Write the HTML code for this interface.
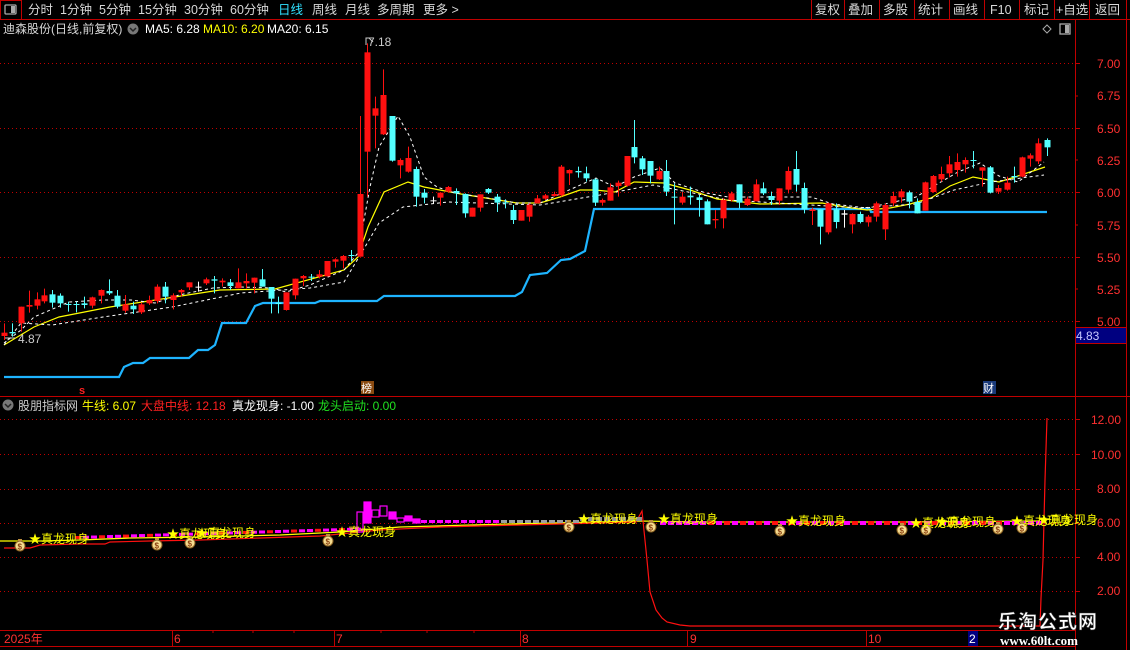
<!DOCTYPE html>
<html><head><meta charset="utf-8"><style>
html,body{margin:0;padding:0;background:#000;width:1130px;height:650px;overflow:hidden}
svg{display:block}
text{font-family:"Liberation Sans","Noto Sans CJK SC",sans-serif}
</style></head><body>
<svg id="s" width="1130" height="650" viewBox="0 0 1130 650" xmlns="http://www.w3.org/2000/svg">
<rect width="1130" height="650" fill="#000"/>
<!-- top bar -->
<g font-size="12.5" fill="#d8d8d8">
<rect x="0.5" y="0.5" width="21" height="19" fill="none" stroke="#c00000"/>
<rect x="5" y="5" width="11" height="9" rx="1" fill="none" stroke="#aaa" stroke-width="1.3"/><rect x="11" y="6" width="4" height="7" fill="#aaa"/>
<text x="28" y="14">分时</text><text x="60" y="14">1分钟</text><text x="99" y="14">5分钟</text><text x="138" y="14">15分钟</text><text x="184" y="14">30分钟</text><text x="230" y="14">60分钟</text>
<text x="278" y="14" fill="#30e0ff">日线</text><text x="312" y="14">周线</text><text x="345" y="14">月线</text><text x="377" y="14">多周期</text><text x="423" y="14">更多 &gt;</text>
<text x="815" y="14">复权</text><text x="848" y="14">叠加</text><text x="883" y="14">多股</text><text x="918" y="14">统计</text><text x="953" y="14">画线</text><text x="990" y="14">F10</text><text x="1024" y="14">标记</text><text x="1056" y="14">+自选</text><text x="1095" y="14">返回</text>
</g>
<g stroke="#c00000" stroke-width="1">
<line x1="0" y1="19.5" x2="1130" y2="19.5"/>
<line x1="811.5" y1="0" x2="811.5" y2="19"/><line x1="844.5" y1="0" x2="844.5" y2="19"/><line x1="879.5" y1="0" x2="879.5" y2="19"/><line x1="914.5" y1="0" x2="914.5" y2="19"/><line x1="949.5" y1="0" x2="949.5" y2="19"/><line x1="984.5" y1="0" x2="984.5" y2="19"/><line x1="1019.5" y1="0" x2="1019.5" y2="19"/><line x1="1054.5" y1="0" x2="1054.5" y2="19"/><line x1="1089.5" y1="0" x2="1089.5" y2="19"/><line x1="1126.5" y1="0" x2="1126.5" y2="650"/>
<line x1="1075.5" y1="20" x2="1075.5" y2="650"/>
<line x1="0" y1="396.5" x2="1130" y2="396.5"/>
<line x1="0" y1="630.5" x2="1075" y2="630.5"/>
<line x1="0" y1="646.5" x2="1075" y2="646.5"/>
</g>
<!-- header row -->
<g font-size="12">
<text x="3" y="33" fill="#d8d8d8">迪森股份(日线,前复权)</text>
<circle cx="133" cy="29" r="5.5" fill="#777"/><path d="M130 28l3 3 3-3" stroke="#222" stroke-width="1.5" fill="none"/>
<text x="145" y="33" fill="#fff">MA5: 6.28</text><text x="203" y="33" fill="#ffff00">MA10: 6.20</text><text x="267" y="33" fill="#fff">MA20: 6.15</text>
</g>
<path d="M1047 25l4 4-4 4-4-4z" fill="none" stroke="#aaa"/>
<rect x="1060" y="24" width="10" height="10" fill="none" stroke="#aaa" stroke-width="1.3"/><rect x="1065" y="25" width="4" height="8" fill="#aaa"/>
<!-- grid -->
<g stroke="#c00000" stroke-dasharray="1,3" stroke-width="1">
<line x1="0" y1="63.5" x2="1075" y2="63.5"/><line x1="0" y1="128.5" x2="1075" y2="128.5"/><line x1="0" y1="192.5" x2="1075" y2="192.5"/><line x1="0" y1="257.5" x2="1075" y2="257.5"/><line x1="0" y1="321.5" x2="1075" y2="321.5"/>
<line x1="0" y1="419.5" x2="1075" y2="419.5"/><line x1="0" y1="454.5" x2="1075" y2="454.5"/><line x1="0" y1="489.5" x2="1075" y2="489.5"/><line x1="0" y1="523.5" x2="1075" y2="523.5"/><line x1="0" y1="557.5" x2="1075" y2="557.5"/><line x1="0" y1="591.5" x2="1075" y2="591.5"/>
</g>
<!-- right axis -->
<g font-size="12" fill="#ff3030">
<text x="1097" y="68">7.00</text><text x="1097" y="100">6.75</text><text x="1097" y="133">6.50</text><text x="1097" y="165">6.25</text><text x="1097" y="197">6.00</text><text x="1097" y="230">5.75</text><text x="1097" y="262">5.50</text><text x="1097" y="294">5.25</text><text x="1097" y="326">5.00</text>
<text x="1091" y="424">12.00</text><text x="1091" y="459">10.00</text><text x="1097" y="493">8.00</text><text x="1097" y="527">6.00</text><text x="1097" y="561">4.00</text><text x="1097" y="595">2.00</text>
</g>
<g stroke="#c00000"><path d="M1075 63.5h5M1075 128.5h5M1075 192.5h5M1075 257.5h5M1075 321.5h5M1075 96h3M1075 160h3M1075 225h3M1075 289h3M1075 419.5h5M1075 454.5h5M1075 489.5h5M1075 523.5h5M1075 557.5h5M1075 591.5h5"/></g>
<rect x="1075.5" y="327.5" width="51" height="16" fill="#000080" stroke="#c00000"/>
<text x="1076" y="340" font-size="12" fill="#c8c8ff">4.83</text>
<g id="main"></g>
<!-- marker labels -->
<text x="368" y="46" font-size="12" fill="#ccc">7.18</text><path d="M366 45v-7h3l4 4" stroke="#ccc" fill="none"/>
<text x="18" y="343" font-size="12" fill="#ccc">4.87</text><path d="M5 338h10" stroke="#ccc"/>
<text x="79" y="394" font-size="11" fill="#ff2020" font-weight="bold">s</text>
<rect x="361" y="381" width="13" height="13" fill="#8a4a10"/><text x="361" y="392" font-size="11" fill="#fff">榜</text>
<rect x="983" y="381" width="13" height="13" fill="#1a3a7a"/><text x="983" y="392" font-size="11" fill="#fff">财</text>
<!-- sub header -->
<g font-size="12">
<circle cx="8" cy="405" r="5.5" fill="#777"/><path d="M5 404l3 3 3-3" stroke="#222" stroke-width="1.5" fill="none"/>
<text x="18" y="410" fill="#ccc">股朋指标网</text>
<text x="82" y="410" fill="#ffff00">牛线: 6.07</text>
<text x="141" y="410" fill="#ff2020">大盘中线: 12.18</text>
<text x="232" y="410" fill="#fff">真龙现身: -1.00</text>
<text x="318" y="410" fill="#20e020">龙头启动: 0.00</text>
</g>
<g id="sub"></g>
<!-- time axis -->
<g font-size="12" fill="#ff3030">
<text x="4" y="643">2025年</text><text x="174" y="643">6</text><text x="336" y="643">7</text><text x="522" y="643">8</text><text x="690" y="643">9</text><text x="868" y="643">10</text>
</g>
<g stroke="#c00000"><path d="M172.5 630v16M334.5 630v16M520.5 630v16M687.5 630v16M866.5 630v16M213 630v3M253 630v3M294 630v3M381 630v3M427 630v3M474 630v3"/></g>
<rect x="968" y="631" width="10" height="15" fill="#000080"/><text x="969" y="643" font-size="12" fill="#fff">2</text>
<!-- watermark -->
<text x="998" y="628" font-size="19" font-weight="bold" fill="#fff" stroke="#333" stroke-width="0.5" style="font-family:'Noto Sans CJK SC',sans-serif;letter-spacing:1px">乐淘公式网</text>
<text x="1000" y="645" font-size="13" font-weight="bold" fill="#fff" style="font-family:'Liberation Serif',serif">www.60lt.com</text>
</svg>
<script>
var NS="http://www.w3.org/2000/svg";
function el(p,t,a){var e=document.createElementNS(NS,t);for(var k in a)e.setAttribute(k,a[k]);p.appendChild(e);return e;}
var M=document.getElementById('main'),S=document.getElementById('sub');
function pl(p,pts,a){a.points=pts.map(function(q){return q.join(',')}).join(' ');a.fill='none';return el(p,'polyline',a);}
// moving avg lines
pl(M,[[4,377],[119,377],[124,367],[133,363],[143,363],[150,358],[189,358],[198,350],[208,350],[215,345],[222,323],[246,323],[255,306],[263,303],[315,303],[320,301],[377,301],[384,296],[515,296],[522,292],[530,275],[547,273],[561,260],[570,259],[585,251],[594,209],[870,209],[871,212],[1047,212]],{stroke:'#1eb4ff','stroke-width':2.2});
pl(M,[[4,345],[34,327],[59,317],[110,307],[220,290],[275,289],[344,270],[358,257],[368,227],[384,192],[408,182],[424,187],[461,194],[517,203],[540,203],[560,197],[580,190],[595,190],[615,192],[634,182],[664,183],[690,190],[717,199],[760,204],[822,203],[845,207],[867,210],[890,208],[910,204],[931,198],[950,186],[973,177],[999,182],[1015,177],[1030,172],[1045,167]],{stroke:'#ffff00','stroke-width':1.2});
pl(M,[[4,343],[21,330],[34,317],[69,302],[103,300],[131,300],[155,303],[179,295],[213,288],[241,287],[272,288],[286,292],[310,285],[344,270],[358,253],[370,187],[379,147],[398,116],[410,137],[424,177],[437,187],[455,193],[482,197],[517,203],[540,203],[596,178],[615,187],[634,177],[660,168],[675,183],[706,193],[728,197],[811,197],[833,204],[867,208],[894,202],[916,197],[939,183],[958,172],[980,163],[999,176],[1018,182],[1044,162]],{stroke:'#fff','stroke-width':1,'stroke-dasharray':'3,3'});
pl(M,[[4,345],[21,323],[52,325],[103,317],[172,307],[241,293],[310,288],[344,282],[365,247],[379,223],[403,207],[448,202],[540,205],[600,195],[653,185],[728,200],[860,208],[916,204],[954,190],[991,182],[1044,175]],{stroke:'#fff','stroke-width':1,'stroke-dasharray':'3,3'});
var A=[[12,878,888,'r',850,900],[36,876,880,'c',850,890],[60,800,850,'r',800,875],[83,795,800,'r',752,818],[106,778,797,'r',757,808],[129,766,784,'r',746,790],[152,763,788,'c',750,803],[175,767,790,'c',760,803],[198,792,795,'c',785,815],[221,792,795,'c',785,817],[245,790,795,'c',770,805],[268,772,797,'r',770,805],[294,750,767,'r',748,790],[317,753,760,'c',718,765],[341,767,800,'c',750,805],[364,793,812,'r',765,818],[387,797,808,'c',785,822],[410,793,817,'r',787,822],[434,780,790,'r',767,795],[457,740,783,'r',733,790],[480,740,770,'c',726,790],[503,766,780,'r',760,808],[527,750,757,'r',747,770],[550,727,742,'r',727,750],[574,740,742,'w',725,755],[598,718,730,'r',713,735],[622,718,722,'c',708,760],[646,722,727,'r',715,740],[669,727,738,'c',717,750],[692,727,745,'r',685,745],[715,723,730,'r',700,745],[739,713,728,'r',713,760],[762,718,740,'c',687,740],[786,741,776,'c',741,820],[808,788,792,'c',770,820],[831,757,810,'r',757,812],[858,716,766,'r',716,778],[881,708,715,'r',705,738],[904,710,712,'c',702,723],[927,703,710,'r',690,715],[951,663,709,'r',663,709],[974,658,665,'r',655,683],[997,648,662,'r',645,685],[1020,645,648,'c',630,665],[1044,462,650,'r',228,650],[1067,37,335,'r',10,470],[1090,205,227,'r',170,325],[1113,165,283,'r',88,285],[1139,228,362,'c',228,365],[1162,360,376,'r',355,415],[1186,354,395,'r',320,398],[1209,387,470,'c',380,500],[1232,458,473,'c',447,490],[1256,481,482,'w',470,492],[1279,458,473,'r',458,497],[1302,441,455,'r',438,458],[1325,453,460,'c',445,495],[1349,462,520,'c',460,533],[1372,503,530,'r',503,530],[1395,463,503,'r',463,515],[1418,447,458,'c',444,462],[1442,470,488,'c',462,516],[1467,487,490,'c',478,505],[1491,510,540,'c',495,552],[1514,510,542,'r',510,542],[1537,494,530,'r',490,545],[1560,475,490,'r',465,490]];
var B=[[14,466,476,'r',462,480],[36,462,468,'r',455,470],[57,380,466,'r',375,470],[78,390,400,'r',388,435],[100,393,397,'c',380,413],[121,400,415,'c',380,425],[145,418,488,'c',415,498],[166,480,488,'r',476,497],[187,442,482,'r',430,482],[208,428,438,'r',422,470],[230,348,437,'r',348,440],[251,321,352,'c',240,370],[272,355,388,'c',348,405],[293,363,407,'c',363,430],[315,393,418,'r',380,420],[336,393,455,'c',360,468],[357,470,472,'c',430,553],[378,470,488,'r',456,494],[400,467,472,'c',440,494],[423,472,480,'c',465,530],[444,484,553,'c',478,553],[466,537,541,'r',510,565],[487,480,535,'r',475,565],[508,460,480,'r',455,485],[529,433,488,'c',433,505],[551,476,495,'r',470,498],[573,433,484,'r',418,484],[594,445,460,'c',427,465],[615,468,480,'c',455,495],[636,445,482,'r',445,495],[660,393,449,'r',380,460],[681,387,434,'c',333,455],[703,444,508,'c',428,520],[724,508,513,'r',503,555],[745,508,560,'c',508,613],[766,490,577,'r',488,583],[787,508,546,'c',490,565],[808,520,524,'w',510,563],[829,522,553,'r',520,580],[851,522,546,'c',515,550],[872,530,547,'r',525,560],[894,490,530,'r',485,545],[916,495,568,'r',490,600],[938,468,490,'r',455,498],[960,454,472,'r',447,488],[982,457,485,'c',452,505],[1003,486,520,'c',475,520],[1024,427,512,'r',425,512],[1045,408,456,'r',405,458],[1067,402,418,'r',380,425],[1088,373,400,'r',348,412],[1109,366,390,'r',340,410],[1130,360,373,'r',352,398],[1152,360,362,'c',333,385],[1175,382,392,'r',382,440],[1197,382,458,'c',378,460],[1218,444,455,'r',435,462],[1240,428,449,'r',410,452],[1261,408,412,'c',380,428],[1282,352,410,'r',350,412],[1303,346,356,'r',340,380],[1325,310,364,'r',295,372],[1347,300,322,'c',295,348]];
function candle(x,d){var t=40+d[1]/3,b=40+d[2]/3,wt=40+d[4]/3,wb=40+d[5]/3;
 var col=d[3]=='r'?'#ff1010':(d[3]=='c'?'#54ffff':'#ffffff');
 x=Math.round(x)+0.5;
 el(M,'line',{x1:x,y1:wt,x2:x,y2:wb,stroke:col,'stroke-width':1});
 var h=Math.max(b-t,1);
 el(M,'rect',{x:x-3,y:t,width:6,height:h,fill:col});}
A.forEach(function(d){candle(d[0]/2.904,d);});
B.forEach(function(d){candle(540+d[0]/2.658,d);});
// sub panel
// yellow & red lines
pl(S,[[0,541],[40,541],[80,540],[130,538],[200,537],[280,535],[340,532],[400,527],[470,525],[550,523],[640,521],[700,522],[900,522],[1040,521]],{stroke:'#ffff00','stroke-width':1.3});
pl(S,[[4,548],[30,548],[40,545],[80,544],[105,544],[110,542],[150,541],[200,540],[260,538],[320,536],[380,530],[440,527],[520,525],[600,523],[636,522],[642,511],[647,560],[650,592],[656,610],[662,618],[667,622],[680,625],[690,626],[1040,626],[1041,598],[1043,560],[1045,480],[1047,418]],{stroke:'#ff1010','stroke-width':1.2});
// bars
for(var x=75;x<356;x+=8){var y=538-(x-75)*0.03;el(S,'rect',{x:x,y:y-2,width:6,height:3,fill:(x%24==3?'#ff1010':'#ff00ff')});}
[[357,512,6,20,0],[364,502,7,21,1],[372,510,7,7,0],[380,506,7,10,0],[389,512,7,7,1],[397,518,7,4,0],[405,516,7,5,1],[413,519,7,4,1]].forEach(function(r){el(S,'rect',{x:r[0],y:r[1],width:r[2],height:r[3],fill:r[4]?'#ff00ff':'none',stroke:'#ff00ff','stroke-width':1.2});});
for(x=421;x<580;x+=8){el(S,'rect',{x:x,y:520,width:6,height:3,fill:x>500?'#a0a0a0':'#ff00ff'});}
for(x=580;x<640;x+=8){el(S,'rect',{x:x,y:517,width:6,height:4,fill:'#909090'});}
for(x=660;x<1040;x+=8){var f=(x>700&&x<1000&&(x%16<8))?'#ff1010':'#ff00ff';el(S,'rect',{x:x,y:521,width:6,height:4,fill:f});}
// labels & bags
function bag(cx,cy){el(S,'circle',{cx:cx,cy:cy,r:5,fill:'#f5dc90',stroke:'#8a6020','stroke-width':1});el(S,'rect',{x:cx-2,y:cy-7,width:4,height:2,fill:'#c09040'});var t=el(S,'text',{x:cx-2.5,y:cy+3.5,'font-size':8,fill:'#8a4010','font-weight':'bold'});t.textContent='$';}
[[20,546],[157,545],[190,543],[328,541],[569,527],[651,527],[780,531],[902,530],[926,530],[998,529],[1022,528]].forEach(function(p){bag(p[0],p[1]);});
[[29,543],[167,538],[196,537],[336,536],[578,523],[658,523],[786,525],[910,527],[936,526],[1011,525],[1038,524]].forEach(function(p){var t=el(S,'text',{x:p[0],y:p[1],'font-size':12,fill:'#ffff00'});t.textContent='★真龙现身';});
</script>
</body></html>
